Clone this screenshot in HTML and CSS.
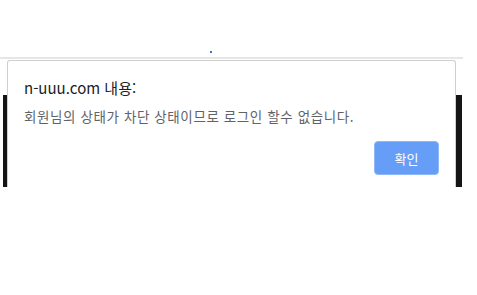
FILE: index.html
```html
<!DOCTYPE html>
<html lang="ko">
<head>
<meta charset="utf-8">
<link rel="stylesheet" href="styles.css">
</head>
<body>
<div class="page">
  <div class="topbar"><span class="dot"></span></div>
  <div class="rule"></div>
  <div class="strip"></div>
  <div class="frame"></div>
</div>
<div class="dialog">
  <div class="title">n-uuu.com 내용:</div>
  <div class="msg">회원님의 상태가 차단 상태이므로 로그인 할수 없습니다.</div>
  <div class="actions"><button class="ok">확인</button></div>
</div>
</body>
</html>
```
FILE: styles.css
```css
html, body { margin: 0; padding: 0; background: #fff; }
body { width: 477px; height: 295px; overflow: hidden; position: relative; font-family: "Noto Sans CJK KR", "Noto Sans", sans-serif; }
.page { width: 463px; }
.topbar { height: 57px; position: relative; }
.dot { position: absolute; left: 210px; top: 51px; width: 2px; height: 2px; background: #3b6fd8; }
.rule { height: 2px; background: #e6e6e6; }
.strip { height: 36px; }
.frame { margin-left: 3px; width: 459px; height: 92px; background: #151515; }
.dialog {
  position: absolute; left: 7px; top: 60px; width: 449px; height: 127px;
  background: #fff; border: 1px solid #cfcfcf; border-bottom: none; border-radius: 3px 3px 0 0;
  padding: 0 16px 0 16px; box-sizing: border-box;
}
.title { margin-top: 17px; font-size: 15px; line-height: 20px; color: #202124; }
.msg { margin-top: 9px; font-size: 13.5px; line-height: 18px; color: #5f6368; letter-spacing: 0.6px; }
.actions { display: flex; justify-content: flex-end; margin-top: 16px; }
.ok {
  width: 65px; height: 34px; background: #669df6; color: #fff; border: 1px solid #8fb8f7; border-radius: 4px;
  font-family: inherit; font-size: 13px; font-weight: 400; padding: 0;
}
```
